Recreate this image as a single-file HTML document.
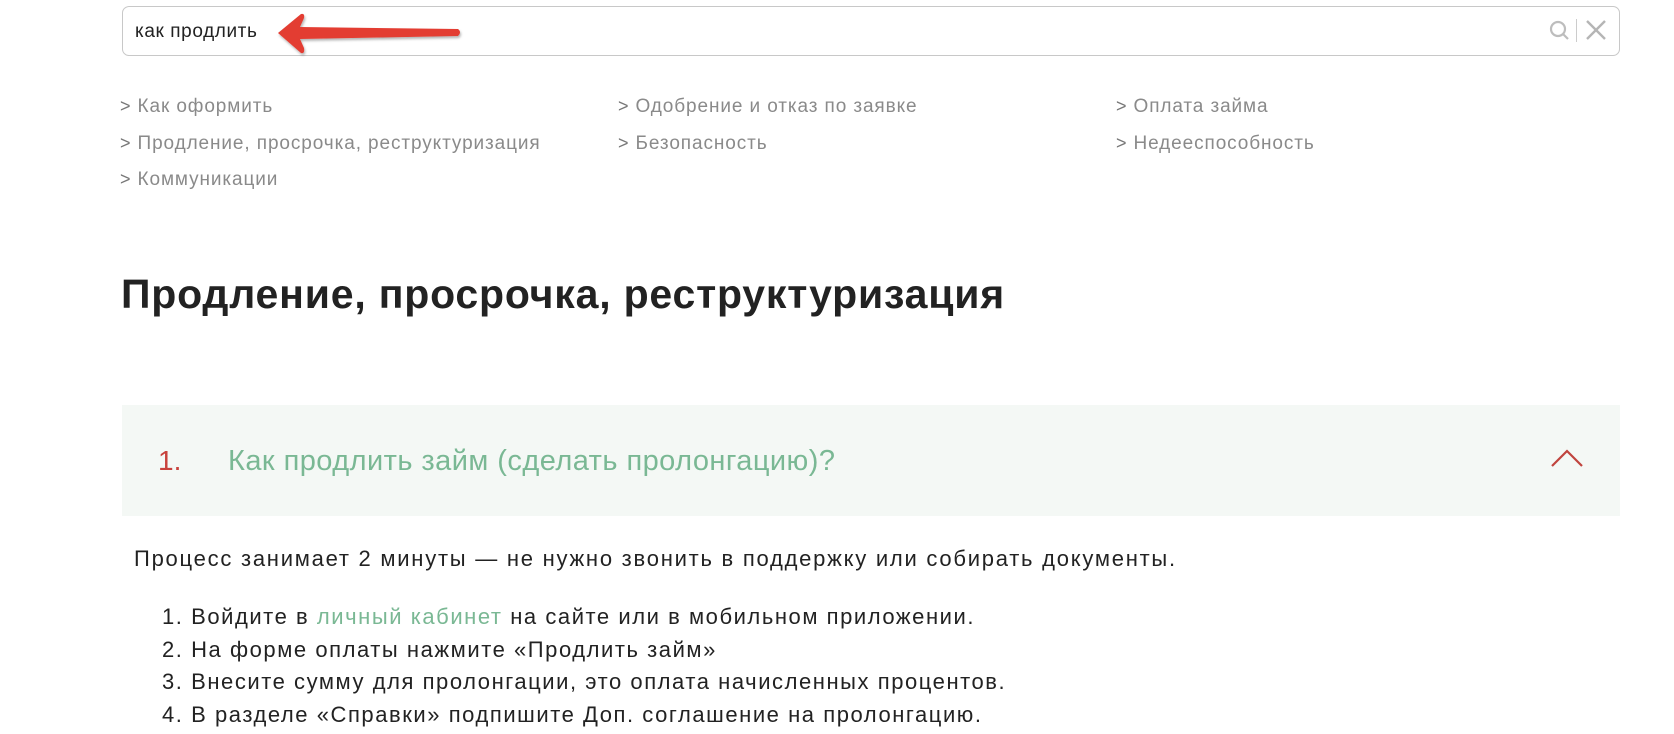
<!DOCTYPE html>
<html><head><meta charset="utf-8"><style>
html,body{margin:0;padding:0;background:#fff;width:1674px;height:734px;overflow:hidden;font-family:"Liberation Sans","Noto Sans CJK SC",sans-serif;}
.abs{position:absolute;white-space:nowrap;}
.search{position:absolute;left:122px;top:6px;width:1496px;height:48px;border:1px solid #c8c8c8;border-radius:7px;}
.lnk{position:absolute;font-size:19px;color:#8a8a8a;letter-spacing:0.9px;}
.lnk span{font-size:18px;margin-right:7px;color:#777;letter-spacing:0}
.body{font-size:22px;letter-spacing:1.5px;color:#222;}
</style></head><body>
<div class="search"></div>
<div class="abs" style="left:135px;top:21px;font-size:19px;color:#222;letter-spacing:0.6px">как продлить</div>
<svg class="abs" style="left:0;top:0" width="1674" height="60">
<defs><filter id="sh"><feDropShadow dx="1" dy="2" stdDeviation="1.2" flood-color="#000" flood-opacity="0.3"/></filter></defs>
<path d="M278 33 L301 14 Q305 13 304 18 L300 27 L458 29 Q462 32 458 36 L300 39 L304 48 Q305 54 301 53 Z" fill="#e33e33" filter="url(#sh)"/>
<g fill="none" stroke="#bdbdbd" stroke-width="2.2">
<circle cx="1558" cy="29" r="7"/><line x1="1563" y1="34" x2="1568" y2="39"/>
</g>
<line x1="1576.5" y1="19" x2="1576.5" y2="42" stroke="#ccc" stroke-width="1"/>
<g stroke="#b5b5b5" stroke-width="2.4"><line x1="1587" y1="21" x2="1605" y2="39"/><line x1="1605" y1="21" x2="1587" y2="39"/></g>
</svg>
<div class="lnk" style="left:120px;top:96px"><span>&gt;</span>Как оформить</div>
<div class="lnk" style="left:618px;top:96px"><span>&gt;</span>Одобрение и отказ по заявке</div>
<div class="lnk" style="left:1116px;top:96px"><span>&gt;</span>Оплата займа</div>
<div class="lnk" style="left:120px;top:133px"><span>&gt;</span>Продление, просрочка, реструктуризация</div>
<div class="lnk" style="left:618px;top:133px"><span>&gt;</span>Безопасность</div>
<div class="lnk" style="left:1116px;top:133px"><span>&gt;</span>Недееспособность</div>
<div class="lnk" style="left:120px;top:169px"><span>&gt;</span>Коммуникации</div>
<div class="abs" style="left:121px;top:271px;font-size:41px;font-weight:bold;color:#222;letter-spacing:0.8px">Продление, просрочка, реструктуризация</div>
<div class="abs" style="left:122px;top:405px;width:1498px;height:111px;background:#f4f8f5"></div>
<div class="abs" style="left:158px;top:445px;font-size:28px;color:#c8423c">1.</div>
<div class="abs" style="left:228px;top:445px;font-size:29px;color:#7ab894;letter-spacing:0.45px">Как продлить займ (сделать пролонгацию)?</div>
<svg class="abs" style="left:1550px;top:445px" width="36" height="24"><polyline points="2,21 17,6 32,21" fill="none" stroke="#c0443e" stroke-width="2.2"/></svg>
<div class="abs body" style="left:134px;top:546px;letter-spacing:1.75px">Процесс занимает 2 минуты — не нужно звонить в поддержку или собирать документы.</div>
<div class="abs body" style="left:162px;top:601px;line-height:32.5px;letter-spacing:1.55px">
1. Войдите в <span style="color:#7ab894">личный кабинет</span> на сайте или в мобильном приложении.<br>
2. На форме оплаты нажмите «Продлить займ»<br>
3. Внесите сумму для пролонгации, это оплата начисленных процентов.<br>
4. В разделе «Справки» подпишите Доп. соглашение на пролонгацию.</div>
</body></html>
